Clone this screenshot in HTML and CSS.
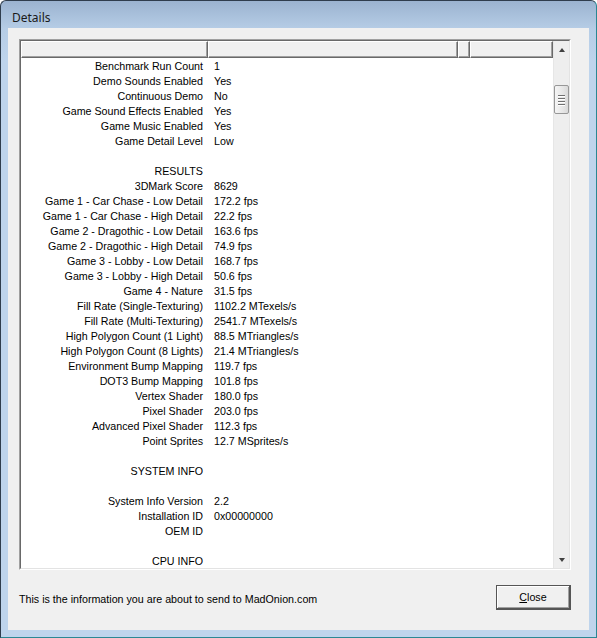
FILE: index.html
```html
<!DOCTYPE html>
<html>
<head>
<meta charset="utf-8">
<link rel="stylesheet" href="styles.css">
</head>
<body>
<div class="window">
  <div class="titlebar"><span class="title">Details</span></div>
  <div class="client">
    <div class="listbox">
      <div class="listbox-inner">
        <div class="list-main">
          <div class="header">
            <div class="hcell c1"></div>
            <div class="hcell c2"></div>
            <div class="hcell c3"></div>
            <div class="hcell c4"></div>
          </div>
          <div class="rows">
            <div class="row"><span class="k">Benchmark Run Count</span><span class="v">1</span></div>
            <div class="row"><span class="k">Demo Sounds Enabled</span><span class="v">Yes</span></div>
            <div class="row"><span class="k">Continuous Demo</span><span class="v">No</span></div>
            <div class="row"><span class="k">Game Sound Effects Enabled</span><span class="v">Yes</span></div>
            <div class="row"><span class="k">Game Music Enabled</span><span class="v">Yes</span></div>
            <div class="row"><span class="k">Game Detail Level</span><span class="v">Low</span></div>
            <div class="row"><span class="k"></span><span class="v"></span></div>
            <div class="row"><span class="k">RESULTS</span><span class="v"></span></div>
            <div class="row"><span class="k">3DMark Score</span><span class="v">8629</span></div>
            <div class="row"><span class="k">Game 1 - Car Chase - Low Detail</span><span class="v">172.2 fps</span></div>
            <div class="row"><span class="k">Game 1 - Car Chase - High Detail</span><span class="v">22.2 fps</span></div>
            <div class="row"><span class="k">Game 2 - Dragothic - Low Detail</span><span class="v">163.6 fps</span></div>
            <div class="row"><span class="k">Game 2 - Dragothic - High Detail</span><span class="v">74.9 fps</span></div>
            <div class="row"><span class="k">Game 3 - Lobby - Low Detail</span><span class="v">168.7 fps</span></div>
            <div class="row"><span class="k">Game 3 - Lobby - High Detail</span><span class="v">50.6 fps</span></div>
            <div class="row"><span class="k">Game 4 - Nature</span><span class="v">31.5 fps</span></div>
            <div class="row"><span class="k">Fill Rate (Single-Texturing)</span><span class="v">1102.2 MTexels/s</span></div>
            <div class="row"><span class="k">Fill Rate (Multi-Texturing)</span><span class="v">2541.7 MTexels/s</span></div>
            <div class="row"><span class="k">High Polygon Count (1 Light)</span><span class="v">88.5 MTriangles/s</span></div>
            <div class="row"><span class="k">High Polygon Count (8 Lights)</span><span class="v">21.4 MTriangles/s</span></div>
            <div class="row"><span class="k">Environment Bump Mapping</span><span class="v">119.7 fps</span></div>
            <div class="row"><span class="k">DOT3 Bump Mapping</span><span class="v">101.8 fps</span></div>
            <div class="row"><span class="k">Vertex Shader</span><span class="v">180.0 fps</span></div>
            <div class="row"><span class="k">Pixel Shader</span><span class="v">203.0 fps</span></div>
            <div class="row"><span class="k">Advanced Pixel Shader</span><span class="v">112.3 fps</span></div>
            <div class="row"><span class="k">Point Sprites</span><span class="v">12.7 MSprites/s</span></div>
            <div class="row"><span class="k"></span><span class="v"></span></div>
            <div class="row"><span class="k">SYSTEM INFO</span><span class="v"></span></div>
            <div class="row"><span class="k"></span><span class="v"></span></div>
            <div class="row"><span class="k">System Info Version</span><span class="v">2.2</span></div>
            <div class="row"><span class="k">Installation ID</span><span class="v">0x00000000</span></div>
            <div class="row"><span class="k">OEM ID</span><span class="v"></span></div>
            <div class="row"><span class="k"></span><span class="v"></span></div>
            <div class="row"><span class="k">CPU INFO</span><span class="v"></span></div>
          </div>
        </div>
        <div class="scrollbar">
          <div class="sb-btn"><span class="tri-up"></span></div>
          <div class="sb-track">
            <div class="sb-thumb">
              <span class="grip"></span><span class="grip"></span><span class="grip"></span><span class="grip"></span>
            </div>
          </div>
          <div class="sb-btn"><span class="tri-down"></span></div>
        </div>
      </div>
    </div>
    <div class="footer">
      <span class="note">This is the information you are about to send to MadOnion.com</span>
      <button class="btn"><span class="ul">C</span>lose</button>
    </div>
  </div>
</div>
</body>
</html>
```

FILE: styles.css
```css
html, body {
  margin: 0;
  padding: 0;
  background: #ffffff;
}

.window {
  box-sizing: border-box;
  width: 597px;
  height: 638px;
  display: flex;
  flex-direction: column;
  border: 1px solid #2f3d4d;
  border-right-color: #2a8793;
  border-bottom-color: #2a8793;
  border-radius: 6px 6px 0 0;
  background: linear-gradient(to bottom, #9bb3d0 0px, #b6cde6 28px, #bed4ec 60px, #bed4ec 100%);
}

.titlebar {
  height: 27px;
  display: flex;
  align-items: center;
  padding-left: 11px;
  flex: none;
}

.title {
  font-family: "Noto Sans", "Open Sans", sans-serif;
  font-size: 12px;
  color: #1a1a1a;
  position: relative;
  top: 3px;
}

.client {
  flex: 1;
  margin: 0 7px 7px 7px;
  background: #f0f0f0;
  padding: 11px 18px 0 11px;
  display: flex;
  flex-direction: column;
  font-family: "Liberation Sans", Arial, sans-serif;
  font-size: 10.7px;
  color: #000;
}

.listbox {
  height: 531px;
  box-sizing: border-box;
  border: 1px solid;
  border-color: #a0a0a0 #ffffff #ffffff #a0a0a0;
  flex: none;
}

.listbox-inner {
  height: 100%;
  box-sizing: border-box;
  border: 1px solid;
  border-color: #696969 #e3e3e3 #e3e3e3 #696969;
  display: flex;
  background: #ffffff;
}

.list-main {
  width: 532px;
  flex: none;
  display: flex;
  flex-direction: column;
  overflow: hidden;
}

.header {
  display: flex;
  height: 17px;
  flex: none;
}

.hcell {
  box-sizing: border-box;
  height: 17px;
  background: #f0f0f0;
  border-top: 1px solid #ffffff;
  border-left: 1px solid #ffffff;
  border-right: 1px solid #696969;
  border-bottom: 1px solid #696969;
  box-shadow: inset -1px -1px 0 #a0a0a0;
}

.c1 { width: 187px; }
.c2 { width: 250px; }
.c3 { width: 12px; }
.c4 { flex: 1; }

.rows {
  display: flex;
  flex-direction: column;
  padding-top: 1px;
}

.row {
  display: flex;
  height: 15px;
  line-height: 15px;
  white-space: nowrap;
}

.k {
  width: 187px;
  flex: none;
  box-sizing: border-box;
  text-align: right;
  padding-right: 5px;
}

.v {
  padding-left: 6px;
}

.scrollbar {
  width: 16px;
  flex: none;
  display: flex;
  flex-direction: column;
  background: #eeeeee;
  border-left: 1px solid #e6e6e6;
  box-sizing: border-box;
}

.sb-btn {
  height: 17px;
  flex: none;
  display: flex;
  align-items: center;
  justify-content: center;
}

.tri-up {
  width: 0;
  height: 0;
  border-left: 3.5px solid transparent;
  border-right: 3.5px solid transparent;
  border-bottom: 4px solid #404040;
}

.tri-down {
  width: 0;
  height: 0;
  border-left: 3.5px solid transparent;
  border-right: 3.5px solid transparent;
  border-top: 4px solid #404040;
}

.sb-track {
  flex: 1;
  padding-top: 27px;
}

.sb-thumb {
  box-sizing: border-box;
  height: 29px;
  width: 15px;
  border: 1px solid #979797;
  border-radius: 2px;
  background: linear-gradient(to right, #f5f5f5, #e6e6e6 60%, #d9d9d9);
  display: flex;
  flex-direction: column;
  align-items: center;
  justify-content: center;
  gap: 2px;
}

.grip {
  width: 7px;
  height: 1px;
  background: #6f6f6f;
  box-shadow: 0 1px 0 #ffffff;
}

.footer {
  flex: 1;
  display: flex;
  align-items: flex-start;
  justify-content: space-between;
  padding-top: 15px;
}

.note {
  margin-top: 8px;
  line-height: 13px;
  color: #000;
}

.btn {
  width: 75px;
  height: 25px;
  box-sizing: border-box;
  padding: 0;
  margin: 0;
  font-family: "Liberation Sans", Arial, sans-serif;
  font-size: 10.7px;
  color: #000;
  background: #f0f0f0;
  border: 1px solid #555555;
  border-right-width: 2px;
  border-bottom-width: 2px;
  box-shadow: inset 1px 1px 0 #ffffff, inset -1px -1px 0 #a0a0a0;
  line-height: 20px;
  text-align: center;
}

.ul {
  text-decoration: underline;
}
```
